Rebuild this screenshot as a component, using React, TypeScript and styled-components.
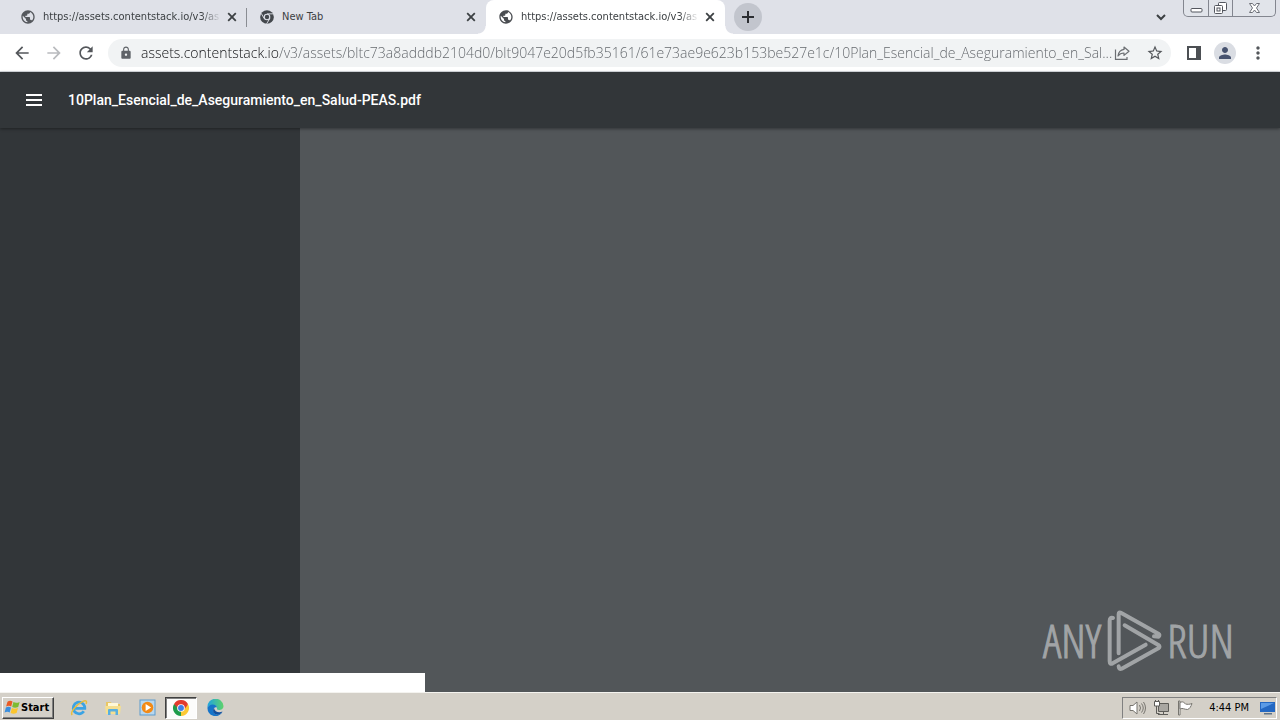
import React from "react";
import styled, { createGlobalStyle, css } from "styled-components";
import {
  MdArrowBack,
  MdArrowForward,
  MdRefresh,
  MdLock,
  MdStarBorder,
  MdPerson,
  MdMoreVert,
  MdPublic,
} from "react-icons/md";

const uiFont = `"DejaVu Sans Condensed", "DejaVu Sans", sans-serif`;

const GlobalStyle = createGlobalStyle`
  *, *::before, *::after { box-sizing: border-box; }
  body { margin: 0; font-family: ${uiFont}; font-size: 11px; }
  button { margin: 0; padding: 0; border: 0; background: none; font: inherit; color: inherit; }
  svg { display: block; flex: none; }
`;

const Screen = styled.div`
  display: flex;
  flex-direction: column;
  min-height: 100vh;
`;

/* Tab strip */

const TabStrip = styled.header`
  display: flex;
  align-items: flex-start;
  height: 34px;
  padding: 0 4px 0 8px;
  background: #dfe1e8;
`;

const TabList = styled.nav`
  display: flex;
  flex: 0 1 717px;
  min-width: 0;
`;

const Tab = styled.div<{ $active?: boolean; $divider?: boolean }>`
  position: relative;
  display: flex;
  flex: 1 1 0;
  align-items: center;
  min-width: 0;
  height: 34px;
  padding: 0 7px 0 12px;
  color: #3c4043;

  ${(p) =>
    p.$divider &&
    css`
      &::after {
        content: "";
        position: absolute;
        right: 0;
        top: 8px;
        width: 1px;
        height: 19px;
        background: #8a8d93;
      }
    `}

  ${(p) =>
    p.$active &&
    css`
      background: #fff;
      border-radius: 8px 8px 0 0;

      &::before,
      &::after {
        content: "";
        position: absolute;
        bottom: 0;
        width: 8px;
        height: 8px;
      }
      &::before {
        right: 100%;
        background: radial-gradient(circle at 0 0, transparent 7px, #fff 8px);
      }
      &::after {
        left: 100%;
        background: radial-gradient(circle at 100% 0, transparent 7px, #fff 8px);
      }
    `}
`;

const TabTitle = styled.span<{ $fade?: boolean }>`
  flex: 1;
  min-width: 0;
  margin: 0 3px 0 7px;
  overflow: hidden;
  white-space: nowrap;
  line-height: 16px;
  ${(p) =>
    p.$fade &&
    css`
      mask-image: linear-gradient(to left, transparent, #000 20px);
    `}
`;

const CloseButton = styled.button`
  display: grid;
  place-items: center;
  flex: none;
  width: 16px;
  height: 16px;
`;

const NewTabButton = styled.button`
  display: grid;
  place-items: center;
  flex: none;
  width: 28px;
  height: 28px;
  margin: 3px auto 0 9px;
  border-radius: 50%;
  background: #c2c5cd;
`;

const TabSearchButton = styled.button`
  display: grid;
  place-items: center;
  width: 20px;
  height: 34px;
  margin-right: 12px;
`;

const WindowControls = styled.div`
  display: flex;
  height: 17px;
  border: 1px solid #83868f;
  border-top: 0;
  border-radius: 0 0 5px 5px;
  background: #e1e4ea;
`;

const WindowButton = styled.button<{ $wide?: boolean }>`
  display: grid;
  place-items: center;
  width: ${(p) => (p.$wide ? 43 : 24)}px;
  & + & {
    border-left: 1px solid #83868f;
  }
`;

/* Address toolbar */

const Toolbar = styled.div`
  display: flex;
  align-items: center;
  height: 38px;
  padding: 0 10px 0 12px;
  background: #fff;
  border-bottom: 1px solid #d9dce0;
  color: #5f6368;
`;

const ButtonGroup = styled.div<{ $gap: number }>`
  display: flex;
  align-items: center;
  flex: none;
  gap: ${(p) => p.$gap}px;
`;

const ToolButton = styled.button<{ $dim?: boolean; $wide?: boolean }>`
  display: grid;
  place-items: center;
  width: ${(p) => (p.$wide ? 24 : 20)}px;
  height: 28px;
  color: ${(p) => (p.$dim ? "#b9bbbe" : "#54575b")};
`;

const AddressBar = styled.form`
  display: flex;
  align-items: center;
  flex: 1;
  min-width: 0;
  height: 28px;
  margin: 0 13px 0 12px;
  padding: 0 9px 0 11px;
  border-radius: 14px;
  background: #f1f3f4;
`;

const AddressInput = styled.input`
  flex: 1;
  min-width: 0;
  height: 24px;
  margin: 0 0 0 8px;
  padding: 0;
  border: 0;
  outline: 0;
  font-family: "Open Sans", "Noto Sans", sans-serif;
  font-size: 14px;
  font-weight: 300;
  color: transparent;
  background: linear-gradient(to right, #101114 138px, #5f6368 138px);
  background-clip: text;
`;

const AddressAction = styled.button`
  display: grid;
  place-items: center;
  flex: none;
  width: 16px;
  height: 28px;
  color: #54575b;
  & + & {
    margin-left: 16px;
  }
`;

const Avatar = styled.button`
  display: grid;
  place-items: center;
  width: 22px;
  height: 22px;
  border-radius: 50%;
  background: #dadde3;
  color: #47536f;
`;

/* PDF viewer */

const ViewerBar = styled.div`
  position: relative;
  z-index: 1;
  display: flex;
  align-items: center;
  gap: 18px;
  height: 56px;
  padding: 0 18px;
  background: #323639;
  color: #fff;
  box-shadow: 0 1px 3px rgba(0, 0, 0, 0.4);
`;

const MenuButton = styled.button`
  display: grid;
  place-items: center;
  width: 32px;
  height: 32px;
`;

const DocumentTitle = styled.h1`
  margin: 0;
  font: 500 14px/20px Roboto, sans-serif;
`;

const Viewer = styled.main`
  position: relative;
  display: flex;
  flex: 1;
`;

const Outline = styled.aside`
  width: 300px;
  background: #323639;
`;

const Pages = styled.section`
  flex: 1;
  background: #525659;
`;

const StatusBubble = styled.div`
  position: absolute;
  left: 0;
  bottom: 0;
  width: 425px;
  height: 19px;
  background: #fff;
`;

const Watermark = styled.div`
  position: absolute;
  right: 46px;
  bottom: 16px;
  display: flex;
  align-items: center;
  color: #a1a4a6;
  font-family: "Open Sans Condensed Light", "Roboto Condensed", sans-serif;
  font-size: 46px;
  font-weight: 300;
  line-height: 68px;
  -webkit-text-stroke: 1px #a1a4a6;
`;

/* Taskbar */

const Taskbar = styled.footer`
  display: flex;
  align-items: center;
  height: 28px;
  padding: 2px 3px 0 2px;
  border-top: 1px solid #f4f3ef;
  background: #d4d0c8;
  color: #000;
`;

const StartButton = styled.button`
  display: flex;
  align-items: center;
  height: 22px;
  padding: 0 4px 0 1px;
  border: 1px solid;
  border-color: #fff #404040 #404040 #fff;
  box-shadow: inset -1px -1px #808080;
  font-weight: 700;
`;

const QuickLaunch = styled.div`
  display: flex;
  align-items: center;
  gap: 2px;
  margin-left: 9px;
`;

const LaunchButton = styled.button<{ $pressed?: boolean }>`
  display: grid;
  place-items: center;
  width: 32px;
  height: 22px;
  border: 1px solid transparent;
  ${(p) =>
    p.$pressed &&
    css`
      border-color: #404040 #fff #fff #404040;
      box-shadow: inset 1px 1px #808080;
      background: #fcfcfb;
    `}
`;

const Tray = styled.div`
  display: flex;
  align-items: center;
  height: 22px;
  margin-left: auto;
  padding: 0 0 0 6px;
  gap: 7px;
  border: 1px solid;
  border-color: #808080 #fff #fff #808080;
`;

const Clock = styled.time`
  margin: 0 3px 0 8px;
  line-height: 16px;
`;

/* Icons */

const CloseIcon = () => (
  <svg width="10" height="10" viewBox="0 0 10 10" stroke="#3c4043" strokeWidth="1.800">
    <path d="M1.200 1.200l7.600 7.600M8.800 1.200l-7.600 7.600" />
  </svg>
);

const ChromeMono = () => (
  <svg width="16" height="16" viewBox="-2 -2 28 28">
    <circle cx="12" cy="12" r="12" fill="#44484d" />
    <path d="M12 6.500H23M7.200 14.800L1.800 5.500M16.800 14.800L11.300 24" stroke="#dfe1e8" strokeWidth="1.600" />
    <circle cx="12" cy="12" r="5.800" fill="#dfe1e8" />
    <circle cx="12" cy="12" r="3.800" fill="#44484d" />
  </svg>
);

const ShareIcon = () => (
  <svg width="16" height="16" viewBox="0 0 16 16" fill="none" stroke="#6b6e72" strokeWidth="1.200">
    <path d="M1.500 4.500v9.900h11.500v-2.400" />
    <path d="M10 2l5 4.200-5 4.200V8C7.300 8 5.500 8.900 4 11c.4-3.400 2.300-6.100 6-6.600z" strokeLinejoin="round" />
  </svg>
);

const SidePanelIcon = () => (
  <svg width="14" height="14" viewBox="0 0 14 14">
    <path d="M1 1h12v12H1z" fill="none" stroke="#4c4f53" strokeWidth="2" />
    <path d="M9 1h4v12H9z" fill="#4c4f53" />
  </svg>
);

const AnyRunMark = () => (
  <svg
    width="66"
    height="72"
    viewBox="0 0 198 216"
    fill="none"
    stroke="#a1a4a6"
    strokeWidth="12"
    strokeLinecap="round"
    strokeLinejoin="round"
  >
    <path d="M53 148V31q0-9 8-4l111 62q6 4 1 9l-14-1" />
    <path d="M71 64l101 59q7 5 0 10L62 194q-8 3-9-7" />
    <path d="M36 42q-10-3-10 9v121q0 10 9 6l99-56" />
  </svg>
);

const WindowsFlag = () => (
  <svg width="17" height="17" viewBox="0 0 17 17">
    <path d="M3.500 2.800C5.200 1.500 7 1.500 8.500 2.600L7.200 7.600C5.600 6.500 4 6.600 2.100 7.600z" fill="#ea5a24" />
    <path d="M9.400 3C11.300 4 13.200 4 15.600 2.900L14.200 8C12 9 10 8.900 8.200 8z" fill="#7dbb32" />
    <path d="M1.900 8.500C3.700 7.500 5.400 7.500 7 8.500L5.700 13.400C4 12.400 2.500 12.500.6 13.500z" fill="#3a8ede" />
    <path d="M7.900 8.900C9.700 9.900 11.600 9.900 14 8.900L12.600 13.900C10.200 15 8.500 14.800 6.600 13.900z" fill="#fbc52d" />
  </svg>
);

const ExplorerIcon = () => (
  <svg width="18" height="18" viewBox="0 0 18 18" fill="none">
    <path d="M13.800 12.300A5.800 5.800 0 1 1 14.800 9.400H4.200" stroke="#3ba3e4" strokeWidth="2.800" />
    <path d="M2.300 15.900C-.5 13.600 6.500 5.500 12.500 2.600 16.300.7 17.200 2.200 16 4.900" stroke="#e8bd3c" strokeWidth="1.500" />
  </svg>
);

const FolderIcon = () => (
  <svg width="18" height="18" viewBox="0 0 18 18">
    <path d="M2 3h5l1 2h8v10H2z" fill="#e9c765" />
    <path d="M4 4h10v3H4z" fill="#fff8d8" />
    <path d="M1 7h16l-1 8H2z" fill="#f5df91" />
    <path d="M4 16v-5q0-1 1-1h8q1 0 1 1v5h-2.500v-3.500h-5V16z" fill="#58afe0" />
  </svg>
);

const PlayerIcon = () => (
  <svg width="17" height="17" viewBox="0 0 17 17">
    <rect x="1" y="1" width="15" height="15" fill="#b8d7ee" stroke="#5d9bcd" />
    <circle cx="8.500" cy="8.500" r="5.800" fill="#f28a16" />
    <path d="M6.600 5l5.500 3.500-5.500 3.500z" fill="#fff" />
  </svg>
);

const ChromeIcon = () => (
  <svg width="16" height="16" viewBox="0 0 48 48">
    <path d="M24 24L3.200 12A24 24 0 0 1 44.800 12z" fill="#e33b2e" />
    <path d="M24 24L44.800 12A24 24 0 0 1 24 48z" fill="#fcc934" />
    <path d="M24 24V48A24 24 0 0 1 3.200 12z" fill="#1e9c4b" />
    <path d="M24 13h21.200L33.500 29.500zM14.500 29.500L3.200 12 24 13z" fill="#e33b2e" />
    <path d="M14.500 29.500L3.200 12 24 34z" fill="#1e9c4b" />
    <path d="M33.500 29.500L24 48 24 34z" fill="#fcc934" />
    <circle cx="24" cy="24" r="11.500" fill="#fff" />
    <circle cx="24" cy="24" r="8.800" fill="#3f7fe8" />
  </svg>
);

const EdgeIcon = () => (
  <svg width="17" height="17" viewBox="0 0 34 34">
    <defs>
      <linearGradient id="edgeTop" x1="0" y1="0" x2="1" y2="0">
        <stop offset="0" stopColor="#1fa4e0" />
        <stop offset="1" stopColor="#5fd36a" />
      </linearGradient>
    </defs>
    <path d="M1 17A16 16 0 0 1 33 14C33 20 28 22 24 22 19 22 20 20 20 18 20 12 8 9 1 17z" fill="url(#edgeTop)" />
    <path d="M1 17C6 8 19 10 20 17 13 14 9 25 17 30 22 33 28 29 31 26A16 16 0 0 1 1 17z" fill="#1674c9" />
    <path d="M14 18C9 25 15 33 24 31 28 29 30 27 31 25 24 28 15 26 14 18z" fill="#124f9e" />
  </svg>
);

const SpeakerIcon = () => (
  <svg width="17" height="16" viewBox="0 0 17 16" fill="none" stroke="#77756f">
    <path d="M1 5.500h3L8 2v12l-4-3.500H1z" fill="#fff" />
    <path d="M10.500 5q2 3 0 6M12.500 3.500q3.500 4.500 0 9M14.500 2q4 6 0 12" />
  </svg>
);

const NetworkIcon = () => (
  <svg width="17" height="16" viewBox="0 0 17 16" fill="none" stroke="#5d5c58">
    <path d="M5.500 3.500h10v8h-10z" fill="#a9a7a2" />
    <path d="M5 14.500h10M10.500 12v2" />
    <path d="M1.500 1.500h5V6h-5z" fill="#fff" />
    <path d="M2.500 0v2M5.500 0v2M3.500 6v7.500h3" />
  </svg>
);

const FlagIcon = () => (
  <svg width="17" height="16" viewBox="0 0 17 16" stroke="#77756f" fill="#fff">
    <path d="M1.500 1h1.500v14H1.500z" />
    <path d="M3 2.500c3-1.500 4 0 5.500 1.500 2 .5 4 .5 6.500-.5-1 3-2.500 5.500-4.500 6C7 9.500 6 7.500 3 9z" />
  </svg>
);

const DesktopIcon = () => (
  <svg width="17" height="16" viewBox="0 0 17 16">
    <path d="M1 2h15v10H1z" fill="#2468c2" />
    <path d="M2 3h13L2 9z" fill="#5b9be6" />
    <path d="M5 13h8v1.500H5z" fill="#5d7288" />
  </svg>
);

const fileUrl = "https://assets.contentstack.io/v3/as";

export default function App() {
  return (
    <Screen>
      <GlobalStyle />
      <TabStrip>
        <TabList aria-label="Tabs">
          <Tab $divider>
            <MdPublic size={16} color="#55585d" />
            <TabTitle $fade>{fileUrl}</TabTitle>
            <CloseButton aria-label="Close tab"><CloseIcon /></CloseButton>
          </Tab>
          <Tab>
            <ChromeMono />
            <TabTitle>New Tab</TabTitle>
            <CloseButton aria-label="Close tab"><CloseIcon /></CloseButton>
          </Tab>
          <Tab $active>
            <MdPublic size={16} color="#4a4d51" />
            <TabTitle $fade>{fileUrl}</TabTitle>
            <CloseButton aria-label="Close tab"><CloseIcon /></CloseButton>
          </Tab>
        </TabList>
        <NewTabButton aria-label="New tab">
          <svg width="12" height="12" viewBox="0 0 12 12" stroke="#2b2d31" strokeWidth="2">
            <path d="M6 0v12M0 6h12" />
          </svg>
        </NewTabButton>
        <TabSearchButton aria-label="Search tabs">
          <svg width="10" height="7" viewBox="0 0 10 7" fill="none" stroke="#3c4043" strokeWidth="2">
            <path d="M1 1l4 4 4-4" />
          </svg>
        </TabSearchButton>
        <WindowControls>
          <WindowButton aria-label="Minimize">
            <svg width="13" height="17" viewBox="0 0 13 17">
              <rect x="1" y="8.500" width="11" height="3.500" rx="1" fill="#fff" stroke="#53565e" />
            </svg>
          </WindowButton>
          <WindowButton aria-label="Restore">
            <svg width="13" height="17" viewBox="0 0 13 17" fill="#fff" stroke="#53565e">
              <rect x="4.500" y="2.500" width="8" height="8" rx="1" />
              <rect x=".5" y="5.500" width="8" height="8" rx="1" />
              <rect x="3" y="8" width="3" height="3" />
            </svg>
          </WindowButton>
          <WindowButton $wide aria-label="Close">
            <svg width="13" height="17" viewBox="0 0 13 17" fill="#fff" stroke="#6c6f77">
              <path d="M1.500 3.500h3l2 2.500 2-2.500h3L8.500 8l3 4.500h-3L6.500 10l-2 2.500h-3l3-4.500z" strokeLinejoin="round" />
            </svg>
          </WindowButton>
        </WindowControls>
      </TabStrip>

      <Toolbar>
        <ButtonGroup $gap={12}>
          <ToolButton aria-label="Back"><MdArrowBack size={20} /></ToolButton>
          <ToolButton $dim aria-label="Forward" disabled><MdArrowForward size={20} /></ToolButton>
          <ToolButton aria-label="Reload"><MdRefresh size={20} /></ToolButton>
        </ButtonGroup>
        <AddressBar onSubmit={(e) => e.preventDefault()}>
          <MdLock size={14} color="#5f6368" />
          <AddressInput
            type="text"
            aria-label="Address"
            spellCheck={false}
            defaultValue="assets.contentstack.io/v3/assets/bltc73a8adddb2104d0/blt9047e20d5fb35161/61e73ae9e623b153be527e1c/10Plan_Esencial_de_Aseguramiento_en_Sal..."
          />
          <AddressAction type="button" aria-label="Share"><ShareIcon /></AddressAction>
          <AddressAction type="button" aria-label="Bookmark"><MdStarBorder size={18} /></AddressAction>
        </AddressBar>
        <ButtonGroup $gap={10}>
          <ToolButton aria-label="Side panel"><SidePanelIcon /></ToolButton>
          <Avatar aria-label="Profile"><MdPerson size={18} /></Avatar>
          <ToolButton $wide aria-label="Menu"><MdMoreVert size={20} /></ToolButton>
        </ButtonGroup>
      </Toolbar>

      <ViewerBar>
        <MenuButton aria-label="Toggle sidebar">
          <svg width="16" height="12" viewBox="0 0 16 12" stroke="#fff" strokeWidth="2">
            <path d="M0 1h16M0 6h16M0 11h16" />
          </svg>
        </MenuButton>
        <DocumentTitle>10Plan_Esencial_de_Aseguramiento_en_Salud-PEAS.pdf</DocumentTitle>
      </ViewerBar>

      <Viewer>
        <Outline />
        <Pages />
        <StatusBubble />
        <Watermark>
          <span>ANY</span>
          <AnyRunMark />
          <span>RUN</span>
        </Watermark>
      </Viewer>

      <Taskbar>
        <StartButton><WindowsFlag />Start</StartButton>
        <QuickLaunch>
          <LaunchButton aria-label="Internet Explorer"><ExplorerIcon /></LaunchButton>
          <LaunchButton aria-label="File Explorer"><FolderIcon /></LaunchButton>
          <LaunchButton aria-label="Media Player"><PlayerIcon /></LaunchButton>
          <LaunchButton $pressed aria-label="Chrome"><ChromeIcon /></LaunchButton>
          <LaunchButton aria-label="Edge"><EdgeIcon /></LaunchButton>
        </QuickLaunch>
        <Tray>
          <SpeakerIcon />
          <NetworkIcon />
          <FlagIcon />
          <Clock>4:44 PM</Clock>
          <DesktopIcon />
        </Tray>
      </Taskbar>
    </Screen>
  );
}
